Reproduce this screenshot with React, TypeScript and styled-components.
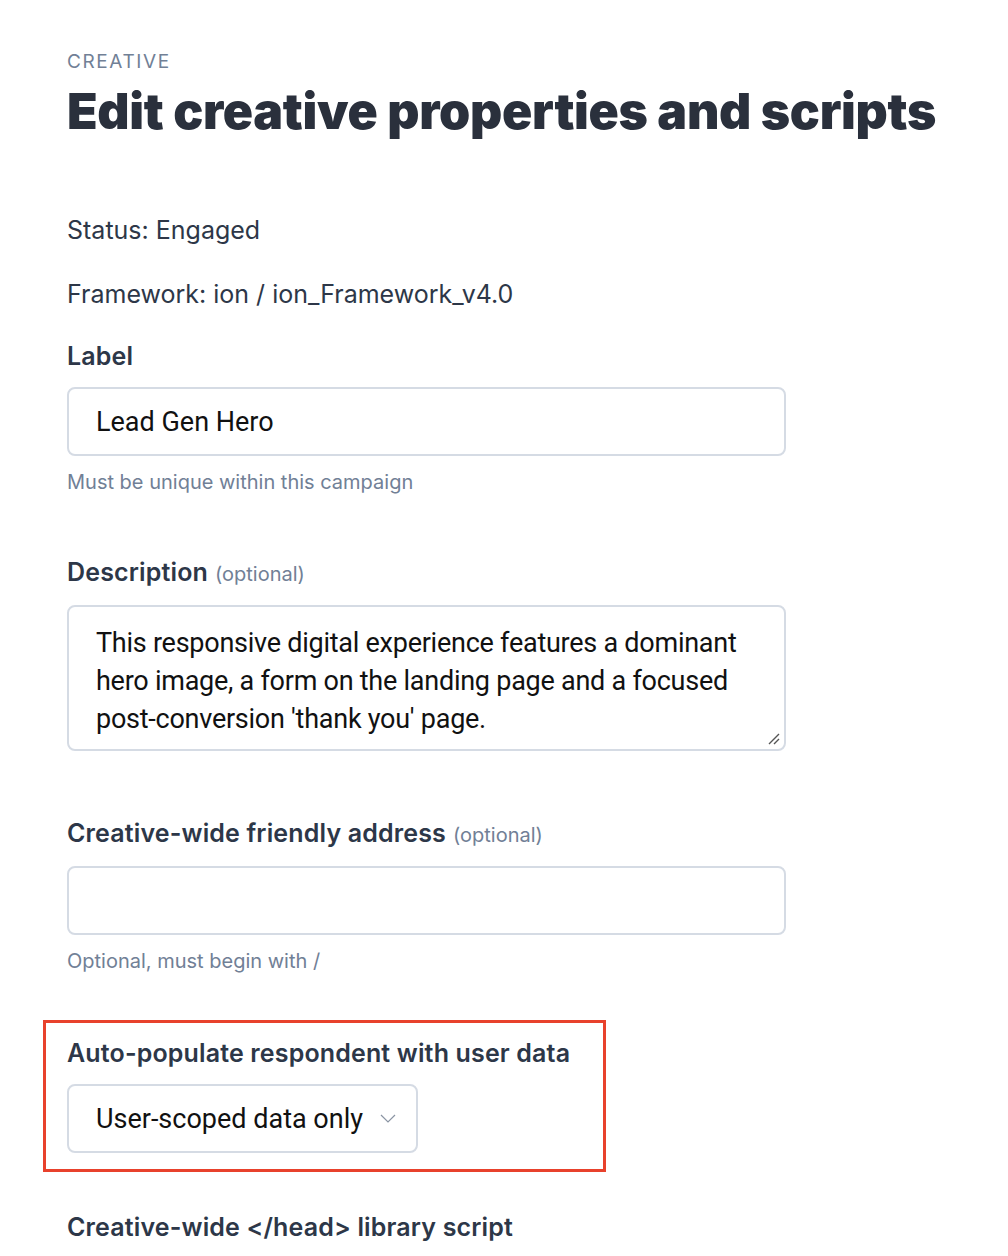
import React from "react";
import styled, { createGlobalStyle } from "styled-components";

const Global = createGlobalStyle`
  html, body { margin: 0; padding: 0; background: #ffffff; }
  body { font-family: Inter, "Liberation Sans", sans-serif; color: #2d3748; }
`;

const Page = styled.main`
  padding: 49px 0 0 67px;
  width: 720px;
  display: flex;
  flex-direction: column;
`;

const Eyebrow = styled.div`
  font-size: 19px;
  letter-spacing: 1.6px;
  color: #718096;
  text-transform: uppercase;
  line-height: 26px;
`;

const Title = styled.h1`
  margin: 6px 0 0;
  font-size: 50px;
  font-weight: 900;
  line-height: 60px;
  white-space: nowrap;
  letter-spacing: -0.3px;
  color: #2a303c;
`;

const Meta = styled.p<{ $top: number }>`
  margin: ${(p) => p.$top}px 0 0;
  font-size: 25px;
  line-height: 32px;
  color: #2d3748;
`;

const Field = styled.div<{ $top: number }>`
  margin-top: ${(p) => p.$top}px;
  display: flex;
  flex-direction: column;
`;

const Label = styled.label`
  font-size: 25px;
  font-weight: 600;
  line-height: 32px;
  letter-spacing: 0.15px;
  color: #2d3748;
  margin-bottom: 15px;
`;

const Optional = styled.span`
  font-weight: 400;
  font-size: 20px;
  letter-spacing: 0;
  color: #718096;
  margin-left: 7px;
`;

const inputBase = `
  box-sizing: border-box;
  border: 2px solid #d5dbe4;
  border-radius: 8px;
  background: #fff;
  font-family: Roboto, "Liberation Sans", sans-serif;
  font-size: 27px;
  color: #111;
  padding: 0 27px;
`;

const TextInput = styled.div`
  ${inputBase}
  width: 719px;
  height: 69px;
  display: flex;
  align-items: center;
`;

const TextArea = styled.div`
  ${inputBase}
  position: relative;
  width: 719px;
  height: 146px;
  padding-top: 17px;
  line-height: 38px;
  letter-spacing: -0.25px;
`;

const Grip = styled.svg`
  position: absolute;
  right: 3px;
  bottom: 3px;
`;

const Help = styled.div`
  margin-top: 12px;
  font-size: 20px;
  line-height: 28px;
  color: #718096;
`;

const Highlight = styled.section`
  margin: 45px 0 0 -24px;
  width: 563px;
  box-sizing: border-box;
  border: 3px solid #e8412c;
  padding: 14px 0 16px 21px;
  display: flex;
  flex-direction: column;
`;

const Select = styled.div`
  ${inputBase}
  width: 351px;
  height: 69px;
  display: flex;
  align-items: center;
  justify-content: space-between;
  padding-right: 20px;
`;

export default function App() {
  return (
    <>
      <Global />
      <Page>
        <Eyebrow>Creative</Eyebrow>
        <Title>Edit creative properties and scripts</Title>
        <Meta $top={73}>Status: Engaged</Meta>
        <Meta $top={32}>Framework: ion / ion_Framework_v4.0</Meta>
        <Field $top={30}>
          <Label>Label</Label>
          <TextInput>Lead Gen Hero</TextInput>
          <Help>Must be unique within this campaign</Help>
        </Field>
        <Field $top={60}>
          <Label>
            Description<Optional>(optional)</Optional>
          </Label>
          <TextArea>
            This responsive digital experience features a dominant hero image, a form on the landing page and a focused
            post-conversion 'thank you' page.
            <Grip width="14" height="14" viewBox="0 0 14 14">
              <path d="M2 12 L12 2 M7 12 L12 7" stroke="#555" strokeWidth="1.4" />
            </Grip>
          </TextArea>
        </Field>
        <Field $top={66}>
          <Label>
            Creative-wide friendly address<Optional>(optional)</Optional>
          </Label>
          <TextInput />
          <Help>Optional, must begin with /</Help>
        </Field>
        <Highlight>
          <Label>Auto-populate respondent with user data</Label>
          <Select>
            <span>User-scoped data only</span>
            <svg width="16" height="10" viewBox="0 0 16 10">
              <path d="M1 1 L8 8 L15 1" fill="none" stroke="#8a94a3" strokeWidth="1.2" />
            </svg>
          </Select>
        </Highlight>
        <Field $top={39}>
          <Label>Creative-wide &lt;/head&gt; library script</Label>
        </Field>
      </Page>
    </>
  );
}
